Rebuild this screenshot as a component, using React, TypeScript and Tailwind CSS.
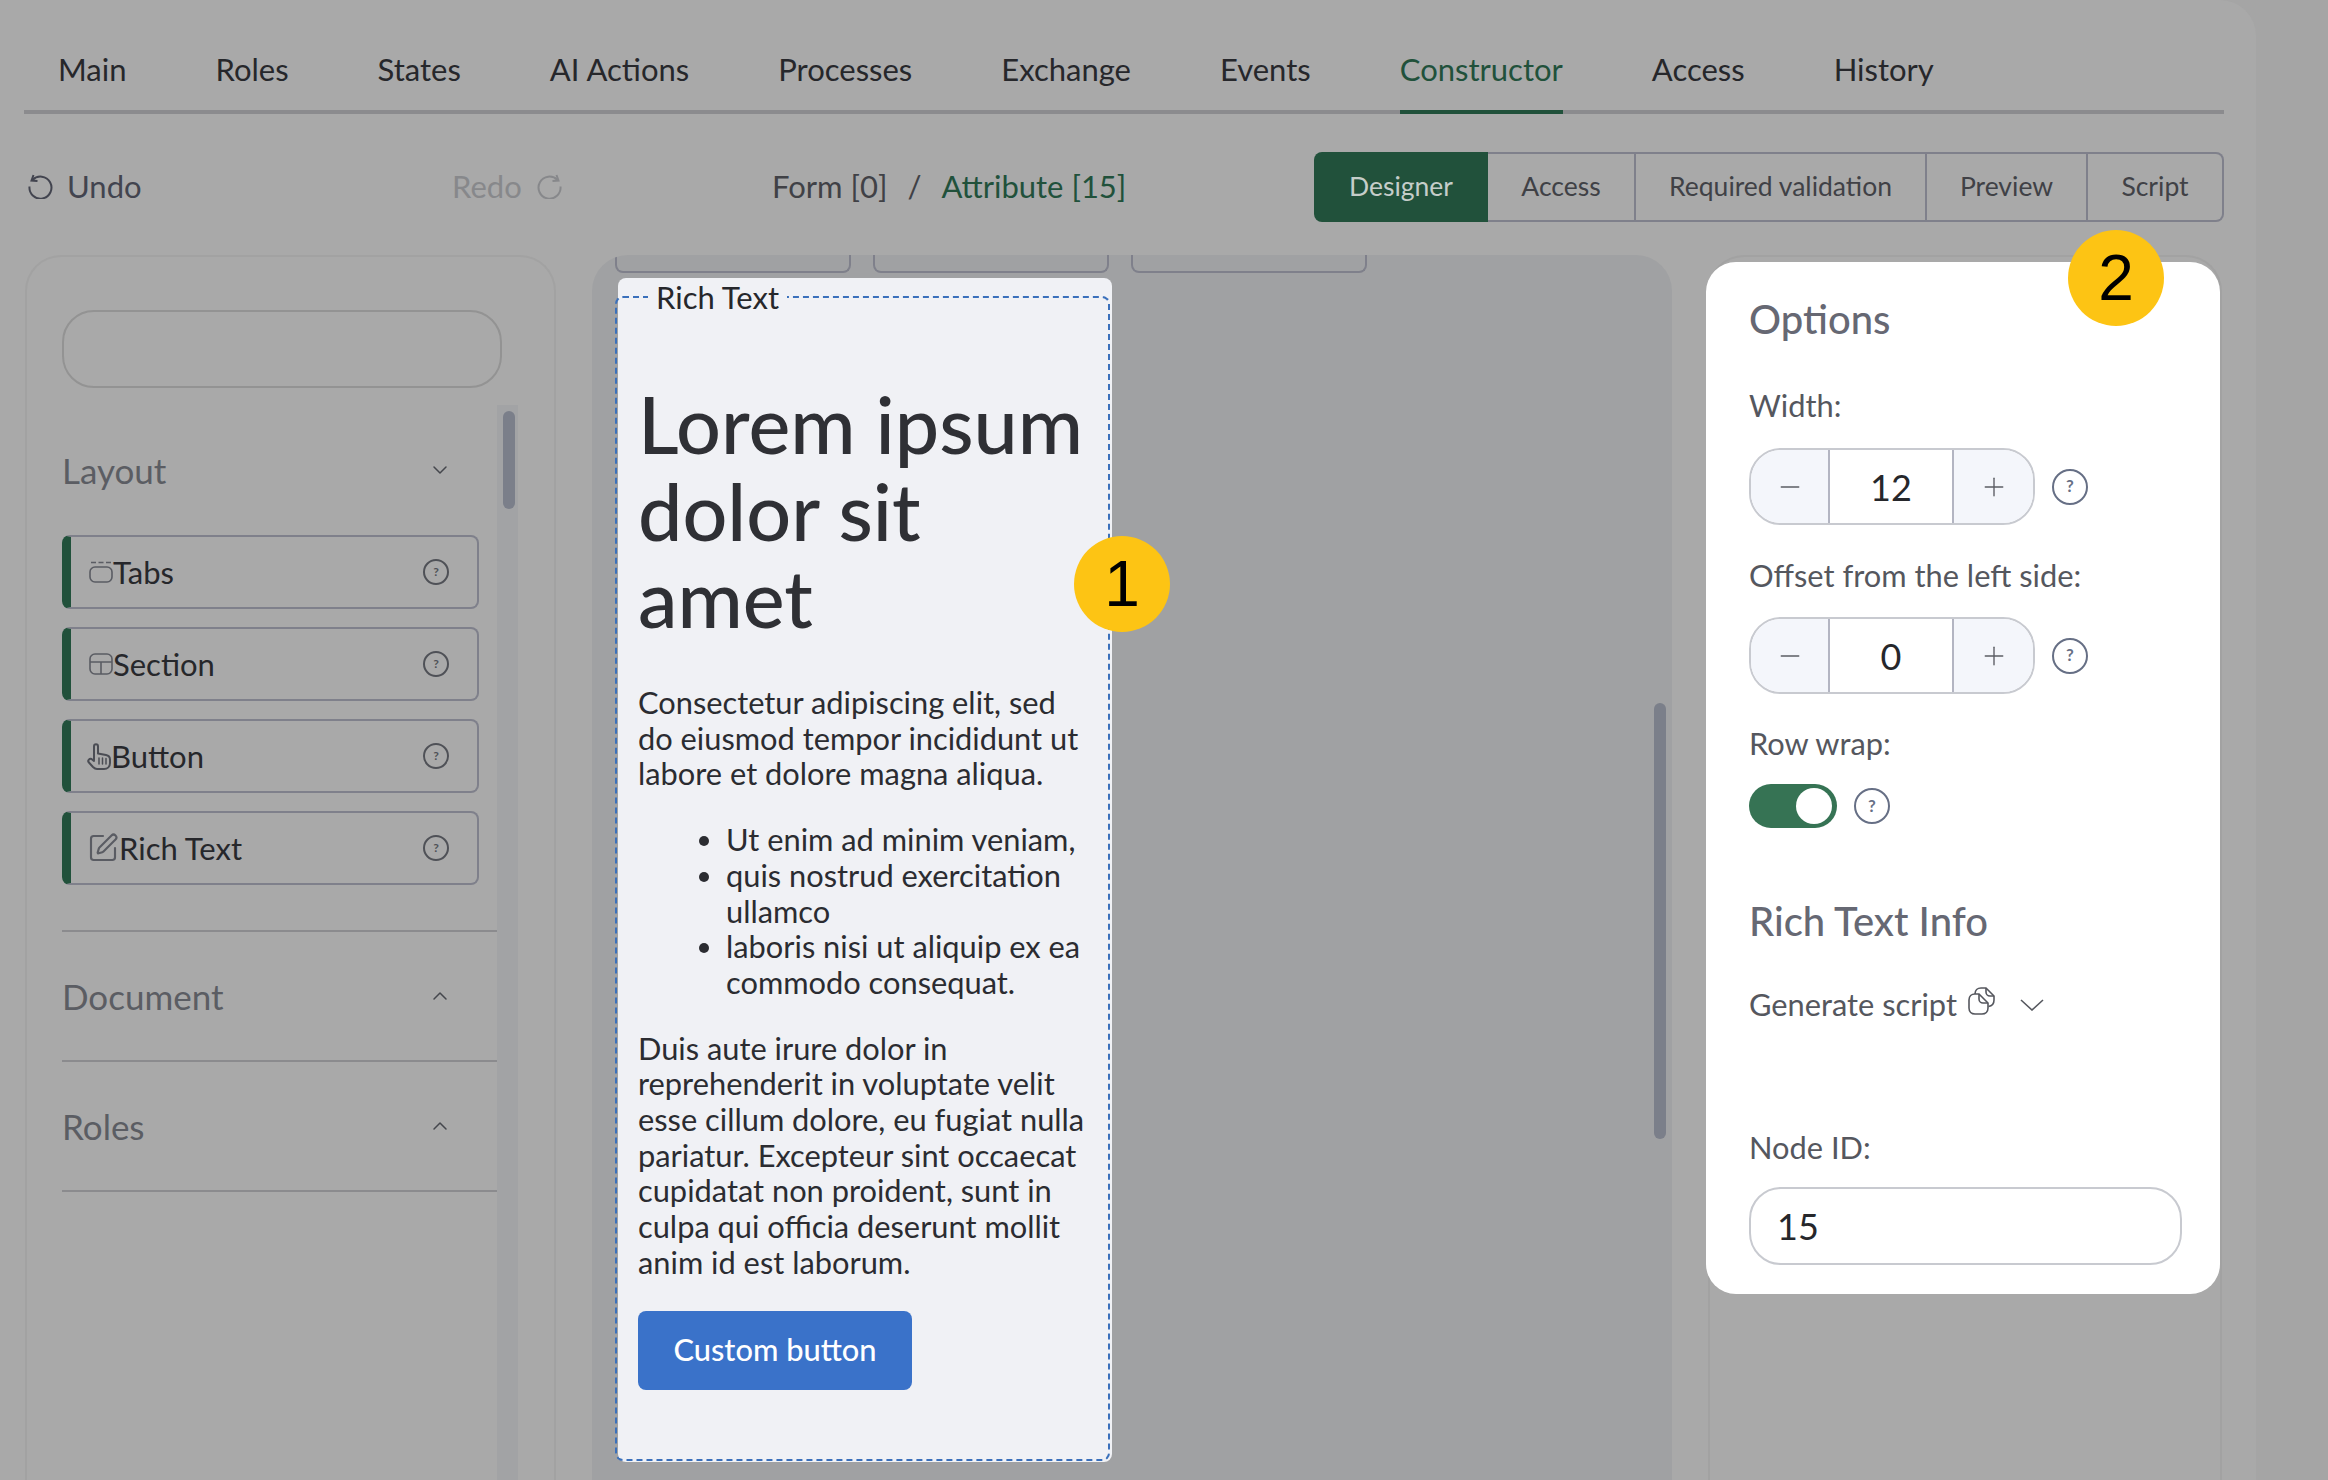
import React from "react";
import { ChevronDown, ChevronUp, Minus, Plus, SquarePen } from "lucide-react";

const tabs = ["Main", "Roles", "States", "AI Actions", "Processes", "Exchange", "Events", "Constructor", "Access", "History"];

function Help({ size = 36, color = "#666f85" }: { size?: number; color?: string }) {
  return (
    <span
      className="flex shrink-0 items-center justify-center rounded-full border-2 font-bold leading-none"
      style={{ width: size, height: size, borderColor: color, color, fontSize: size * 0.47 }}
    >
      ?
    </span>
  );
}

function TabsIcon() {
  return (
    <svg width="24" height="22" viewBox="0 0 24 22" fill="none" stroke="#5a5c63" strokeWidth="1.6">
      <rect x="1" y="6" width="22" height="15" rx="5" />
      <path d="M2 1.500h5M9.500 1.500h5M17 1.500h5" />
    </svg>
  );
}

function SectionIcon() {
  return (
    <svg width="24" height="22" viewBox="0 0 24 22" fill="none" stroke="#5a5c63" strokeWidth="1.6">
      <rect x="1" y="1" width="22" height="20" rx="5" />
      <path d="M1 9h22M12 9v12" />
    </svg>
  );
}

function HandIcon() {
  return (
    <svg width="24" height="27" viewBox="0 0 24 27" fill="none" stroke="#4b4d54" strokeWidth="2" strokeLinejoin="round" strokeLinecap="round">
      <path d="M7 17V3.500C7 0.500 11 0.500 11 3.500V10.500L19 12C21.500 12.500 23 14 23 16.500V20C23 23.500 20.500 26 17 26H10C8 26 7 25 6 24L1.500 19C0.500 17.500 2.500 15 4.500 16L7 18" />
      <path d="M12 15V21M15.500 15V21M19 15.500V21" strokeWidth="1.5" />
    </svg>
  );
}

function CopyIcon() {
  return (
    <svg width="27" height="28" viewBox="0 0 27 28" fill="none" stroke="#55575e" strokeWidth="1.6">
      <path d="M7 7H11L20 16V21C20 24.500 17.500 27 14 27H7C3.500 27 1 24.500 1 21V13C1 9.500 3.500 7 7 7Z" />
      <path d="M11 7V12C11 14.500 13 16 15 16H20" />
      <path d="M7 7C7 3.500 9.500 1 13 1H18L26 9V13C26 16.500 24 19 20.500 19.500" />
      <path d="M18 1V5C18 7 19.500 9 22 9H26" />
    </svg>
  );
}

function Item({ icon, label, left, w }: { icon: React.ReactNode; label: string; left: number; w: number }) {
  return (
    <div className="flex h-[74px] w-[417px] items-center rounded-[8px] border-2 border-l-[9px] border-[#7f808b] border-l-[#21513b]">
      <span className="flex justify-center" style={{ marginLeft: left, width: w }}>{icon}</span>
      <span className="text-[31px] text-[#26272b]">{label}</span>
      <span className="ml-auto mr-[28px]">
        <Help size={26} color="#4f5157" />
      </span>
    </div>
  );
}

function Stepper({ value }: { value: string }) {
  return (
    <div className="flex h-[77px] w-[286px] overflow-hidden rounded-[32px] border-2 border-[#c8cad0]">
      <div className="flex w-[79px] items-center justify-center border-r-2 border-[#b3b5c2] bg-[#f4f6fb] text-[#5b5d64]">
        <Minus size={30} strokeWidth={1.1} />
      </div>
      <div className="flex flex-1 items-center justify-center text-[36px] text-[#26272b]">{value}</div>
      <div className="flex w-[81px] items-center justify-center border-l-2 border-[#b3b5c2] bg-[#f4f6fb] text-[#5b5d64]">
        <Plus size={30} strokeWidth={1.1} />
      </div>
    </div>
  );
}

function Badge({ n, className }: { n: string; className: string }) {
  return (
    <div
      className={`absolute flex h-[96px] w-[96px] items-center justify-center rounded-full bg-[#fdc414] text-[64px] text-black ${className}`}
      style={{ fontFamily: '"Liberation Sans", sans-serif' }}
    >
      {n}
    </div>
  );
}

export default function App() {
  return (
    <div
      className="relative h-[1480px] w-[2328px] overflow-hidden bg-[#a5a5a5]"
      style={{ fontFamily: 'Lato, "Noto Sans", sans-serif' }}
    >
      <div className="h-[1480px] w-[2256px] rounded-tr-[36px] bg-[#a9a9a9]">
        {/* Tabs */}
        <div className="ml-[24px] flex h-[114px] w-[2200px] gap-[89px] border-b-4 border-[#8b8b8e] pl-[34px]">
          {tabs.map((t) => (
            <div
              key={t}
              className={`-mb-[4px] flex h-[114px] items-start border-b-4 pt-[49px] text-[31px] leading-[40px] ${
                t === "Constructor" ? "border-[#21513b] text-[#21513b]" : "border-transparent text-[#26272b]"
              }`}
            >
              {t}
            </div>
          ))}
        </div>

        {/* Toolbar */}
        <div className="mt-[38px] flex h-[70px] items-center text-[31px]">
          <div className="ml-[28px] flex w-[424px] -translate-y-[1px] items-center gap-[14px] text-[#42444f]">
            <svg width="25" height="25" viewBox="0 0 25 25" fill="none" stroke="#42444f" strokeWidth="2">
              <path d="M4.500 6A11 11 0 1 1 1.500 12.500" />
              <path d="M5.500 1L3.500 6.500L9.500 7" />
            </svg>
            <span>Undo</span>
          </div>
          <div className="flex w-[320px] -translate-y-[1px] items-center gap-[15px] text-[#87888b]">
            <span>Redo</span>
            <svg width="25" height="25" viewBox="0 0 25 25" fill="none" stroke="#87888b" strokeWidth="2">
              <path d="M20.500 6A11 11 0 1 0 23.500 12.500" />
              <path d="M19.500 1L21.500 6.500L15.500 7" />
            </svg>
          </div>
          <div className="flex w-[542px] -translate-y-[1px] items-center">
            <span className="text-[#404146]">Form [0]</span>
            <span className="mx-[20px] text-[#404146]">/</span>
            <span className="text-[#21513b]">Attribute [15]</span>
          </div>
          <div className="flex h-[70px] w-[910px] text-[26.500px] text-[#404146]">
            <div className="flex w-[174px] items-center justify-center rounded-l-[8px] bg-[#21513b] text-[#c5cdc9]">Designer</div>
            <div className="flex w-[148px] items-center justify-center border-y-2 border-r-2 border-[#7f808b]">Access</div>
            <div className="flex w-[291px] items-center justify-center border-y-2 border-r-2 border-[#7f808b]">Required validation</div>
            <div className="flex w-[161px] items-center justify-center border-y-2 border-r-2 border-[#7f808b]">Preview</div>
            <div className="flex w-[136px] items-center justify-center rounded-r-[8px] border-y-2 border-r-2 border-[#7f808b]">Script</div>
          </div>
        </div>

        {/* Panels */}
        <div className="ml-[25px] mt-[33px] flex items-start gap-[36px]">
          {/* Left */}
          <div className="relative h-[1225px] w-[531px] shrink-0 rounded-t-[36px] border-2 border-b-0 border-[#a2a2a2] pl-[35px]">
            <div className="mt-[53px] h-[78px] w-[440px] rounded-[32px] border-2 border-[#939393]" />
            <div className="absolute bottom-0 left-[470px] top-[148px] w-[21px] bg-[#a2a3a5]">
              <div className="ml-[6px] mt-[6px] h-[98px] w-[12px] rounded-full bg-[#7b7f8a]" />
            </div>
            <div className="mt-[39px] w-[435px]">
              <div className="flex h-[88px] -translate-y-[1px] items-center justify-between pr-[45px] text-[35px] text-[#5b5d63]">
                <span>Layout</span>
                <ChevronDown size={24} strokeWidth={1.5} color="#45474d" />
              </div>
              <div className="mt-[20px] flex flex-col gap-[18px]">
                <Item icon={<TabsIcon />} label="Tabs" left={18} w={24} />
                <Item icon={<SectionIcon />} label="Section" left={18} w={24} />
                <Item icon={<HandIcon />} label="Button" left={16} w={24} />
                <Item icon={<SquarePen size={32} strokeWidth={1.6} color="#5a5c63" />} label="Rich Text" left={16} w={32} />
              </div>
              <div className="mt-[45px] flex h-[132px] items-center justify-between border-y-2 border-[#8b8b8e] pr-[45px] text-[35px] text-[#5b5d63]">
                <span>Document</span>
                <ChevronUp size={24} strokeWidth={1.5} color="#45474d" />
              </div>
              <div className="flex h-[130px] items-center justify-between border-b-2 border-[#8b8b8e] pr-[45px] text-[35px] text-[#5b5d63]">
                <span>Roles</span>
                <ChevronUp size={24} strokeWidth={1.5} color="#45474d" />
              </div>
            </div>
          </div>

          {/* Center */}
          <div className="relative h-[1225px] w-[1080px] shrink-0 overflow-hidden rounded-t-[36px] bg-[#a0a1a3] pl-[23px]">
            <div className="flex gap-[22px]">
              <div className="h-[18px] w-[236px] rounded-b-[8px] border-2 border-t-0 border-[#7f808b]" />
              <div className="h-[18px] w-[236px] rounded-b-[8px] border-2 border-t-0 border-[#7f808b]" />
              <div className="h-[18px] w-[236px] rounded-b-[8px] border-2 border-t-0 border-[#7f808b]" />
            </div>
            <div className="relative ml-[3px] mt-[5px] h-[1184px] w-[494px] rounded-[8px] bg-[#f0f1f5]">
              <div className="absolute -left-[3px] bottom-[1px] right-[2px] top-[18px] rounded-[8px] border-2 border-dashed border-[#3a70bb]" />
              <div className="absolute left-[30px] top-[1px] bg-[#f0f1f5] px-[8px] text-[31px] leading-[36px] text-[#26272b]">Rich Text</div>
              <div className="relative pl-[20px] pr-[22px] pt-[102px] text-[30.800px] leading-[35.700px] text-[#2b2c31]">
                <h1 className="text-[79px] font-medium leading-[87px] text-[#2f3035]">Lorem ipsum dolor sit amet</h1>
                <p className="mt-[44px]">Consectetur adipiscing elit, sed do eiusmod tempor incididunt ut labore et dolore magna aliqua.</p>
                <ul className="mt-[30px] list-disc pl-[88px]">
                  <li>Ut enim ad minim veniam,</li>
                  <li>quis nostrud exercitation ullamco</li>
                  <li>laboris nisi ut aliquip ex ea commodo consequat.</li>
                </ul>
                <p className="mt-[30px]">Duis aute irure dolor in reprehenderit in voluptate velit esse cillum dolore, eu fugiat nulla pariatur. Excepteur sint occaecat cupidatat non proident, sunt in culpa qui officia deserunt mollit anim id est laborum.</p>
                <div className="mt-[30px] flex h-[79px] w-[274px] items-center justify-center rounded-[8px] bg-[#3a72c9] font-medium text-white">Custom button</div>
              </div>
            </div>
            <div className="absolute right-[6px] top-[448px] h-[436px] w-[12px] rounded-full bg-[#7b7f8a]" />
          </div>

          {/* Right */}
          <div className="h-[1225px] w-[514px] shrink-0 rounded-t-[36px] border-2 border-b-0 border-[#a2a2a2]">
            <div className="-ml-[4px] mt-[5px] h-[1032px] w-[514px] rounded-[30px] bg-white pl-[43px]">
              <div className="pt-[33px] text-[40px] font-medium leading-[48px] text-[#666873]">Options</div>
              <div className="mt-[45px] text-[30.800px] leading-[36px] text-[#55575e]">Width:</div>
              <div className="mt-[24px] flex items-center gap-[17px]">
                <Stepper value="12" />
                <Help />
              </div>
              <div className="pt-[33px] text-[30.800px] leading-[36px] text-[#55575e]">Offset from the left side:</div>
              <div className="mt-[23px] flex items-center gap-[17px]">
                <Stepper value="0" />
                <Help />
              </div>
              <div className="pt-[32px] text-[30.800px] leading-[36px] text-[#55575e]">Row wrap:</div>
              <div className="mt-[22px] flex items-center gap-[17px]">
                <div className="flex h-[44px] w-[88px] items-center justify-end rounded-full bg-[#367354] pr-[5px]">
                  <div className="h-[36px] w-[36px] rounded-full bg-white" />
                </div>
                <Help />
              </div>
              <div className="mt-[69px] text-[40px] font-medium leading-[48px] text-[#666873]">Rich Text Info</div>
              <div className="mt-[36px] flex h-[48px] items-center text-[30.800px] text-[#55575e]">
                <span>Generate script</span>
                <span className="ml-[11px] -mt-[8px]"><CopyIcon /></span>
                <svg className="ml-[25px]" width="24" height="12" viewBox="0 0 24 12" fill="none" stroke="#55575e" strokeWidth="1.6">
                  <path d="M1 1L12 11L23 1" />
                </svg>
              </div>
              <div className="mt-[101px] text-[30.800px] leading-[36px] text-[#55575e]">Node ID:</div>
              <div className="mt-[21px] flex h-[78px] w-[433px] items-center rounded-[32px] border-2 border-[#c8cad0] pl-[26px] text-[36px] text-[#26272b]">15</div>
            </div>
          </div>
        </div>
      </div>

      <Badge n="1" className="left-[1074px] top-[536px]" />
      <Badge n="2" className="left-[2068px] top-[230px]" />
    </div>
  );
}
